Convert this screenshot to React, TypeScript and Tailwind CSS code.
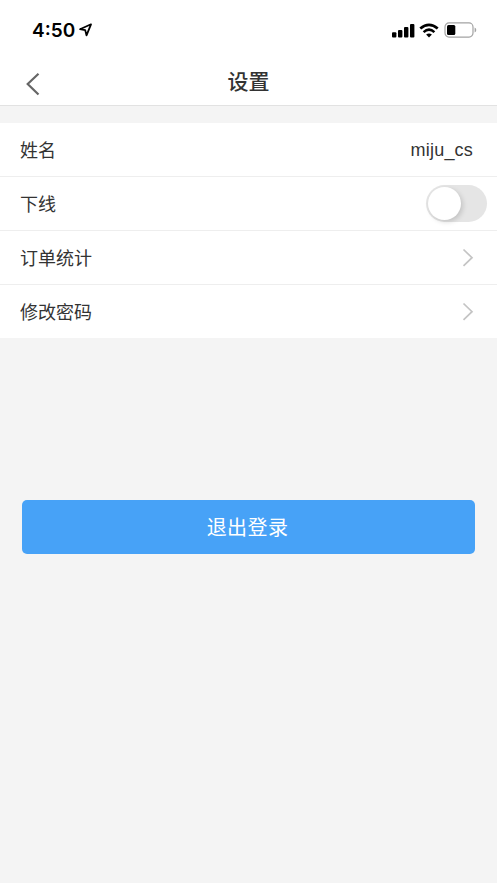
import type { ReactNode } from "react"

type RowProps = {
  label: string
  last?: boolean
  children?: ReactNode
}

function Row({ label, last, children }: RowProps) {
  return (
    <div className={`flex items-center justify-between bg-white pl-5 ${last ? "h-[53px]" : "h-[54px] border-b border-[#eeeeee]"}`}>
      <span className="pt-0.5 text-[18px]">{label}</span>
      {children}
    </div>
  )
}

function Chevron() {
  return (
    <svg width="12" height="20" viewBox="0 0 12 20" fill="none" className="mr-[23px]">
      <path d="M1.5 1.5L10 9.7L1.5 17.9" stroke="#c4c4c4" strokeWidth="1.7" />
    </svg>
  )
}

function StatusBar() {
  return (
    <div className="flex h-[60px] items-center justify-between pl-8 pr-5 text-black">
      <div className="flex items-center gap-[3px]">
        <span className="font-['Inter','Liberation_Sans',sans-serif] text-[19px] font-semibold leading-none">4:50</span>
        <svg width="15" height="14" viewBox="0 0 15 14" fill="none">
          <path d="M13 1.3L2 6.2L7.2 7.1L8.5 12.4Z" stroke="#000" strokeWidth="1.8" strokeLinejoin="round" />
        </svg>
      </div>
      <div className="flex items-center">
        <svg width="23" height="15" viewBox="0 0 23 15">
          <rect x="0" y="9.3" width="4.4" height="5.2" rx="1" />
          <rect x="6" y="7" width="4.4" height="7.5" rx="1" />
          <rect x="12" y="4" width="4.4" height="10.5" rx="1" />
          <rect x="18" y="1" width="4.4" height="13.5" rx="1" />
        </svg>
        <svg width="20" height="15" viewBox="0 0 20 15" fill="none" className="ml-1 mr-px">
          <path d="M1.3 5.5Q10 -1.8 18.7 5.5" stroke="#000" strokeWidth="2.8" />
          <path d="M4.6 9.1Q10 4.3 15.4 9.1" stroke="#000" strokeWidth="2.6" />
          <path d="M7.1 11.5Q10 9.3 12.9 11.5L10 14.4Z" fill="#000" />
        </svg>
        <svg width="33" height="16" viewBox="0 0 33 16" className="ml-1">
          <rect x="1" y="0.9" width="28" height="14.2" rx="4" fill="none" stroke="#a3a3a3" strokeWidth="1.2" />
          <rect x="3" y="3" width="8.3" height="10" rx="1.5" />
          <path d="M30.6 5.6Q32.3 6.2 32.3 8Q32.3 9.8 30.6 10.4Z" fill="#a3a3a3" />
        </svg>
      </div>
    </div>
  )
}

export default function App() {
  return (
    <div className="min-h-screen bg-[#f4f4f4] font-['Inter','Noto_Sans_CJK_SC',sans-serif] text-[#333333]">
      <header className="h-[106px] border-b border-[#e2e2e2] bg-white">
        <StatusBar />
        <div className="grid h-[42px] grid-cols-3 items-center">
          <button className="ml-[25px] mt-1.5 w-4">
            <svg width="16" height="24" viewBox="0 0 16 24" fill="none">
              <path d="M13.5 1.7L2.7 12L13.5 22.5" stroke="#666666" strokeWidth="2.2" />
            </svg>
          </button>
          <h1 className="pt-0.5 text-center text-[21px] font-medium">设置</h1>
        </div>
      </header>

      <main>
        <div className="mt-[17px]">
          <Row label="姓名">
            <span className="mr-6 pt-0.5 font-['Liberation_Sans',sans-serif] text-[18px] tracking-[0.2px]">miju_cs</span>
          </Row>
          <Row label="下线">
            <button className="mr-2.5 flex h-[37px] w-[61px] items-center rounded-full bg-[#e5e5e5] pl-0.5">
              <span className="size-[33px] rounded-full bg-white shadow-[2px_2px_5px_rgba(0,0,0,0.15)]" />
            </button>
          </Row>
          <Row label="订单统计">
            <Chevron />
          </Row>
          <Row label="修改密码" last>
            <Chevron />
          </Row>
        </div>

        <div className="mt-[162px] px-[22px]">
          <button className="h-[54px] w-full rounded-[5px] bg-[#47a2f7] pr-0.5 pt-0.5 text-[20px] tracking-[0.4px] text-white">退出登录</button>
        </div>
      </main>
    </div>
  )
}
